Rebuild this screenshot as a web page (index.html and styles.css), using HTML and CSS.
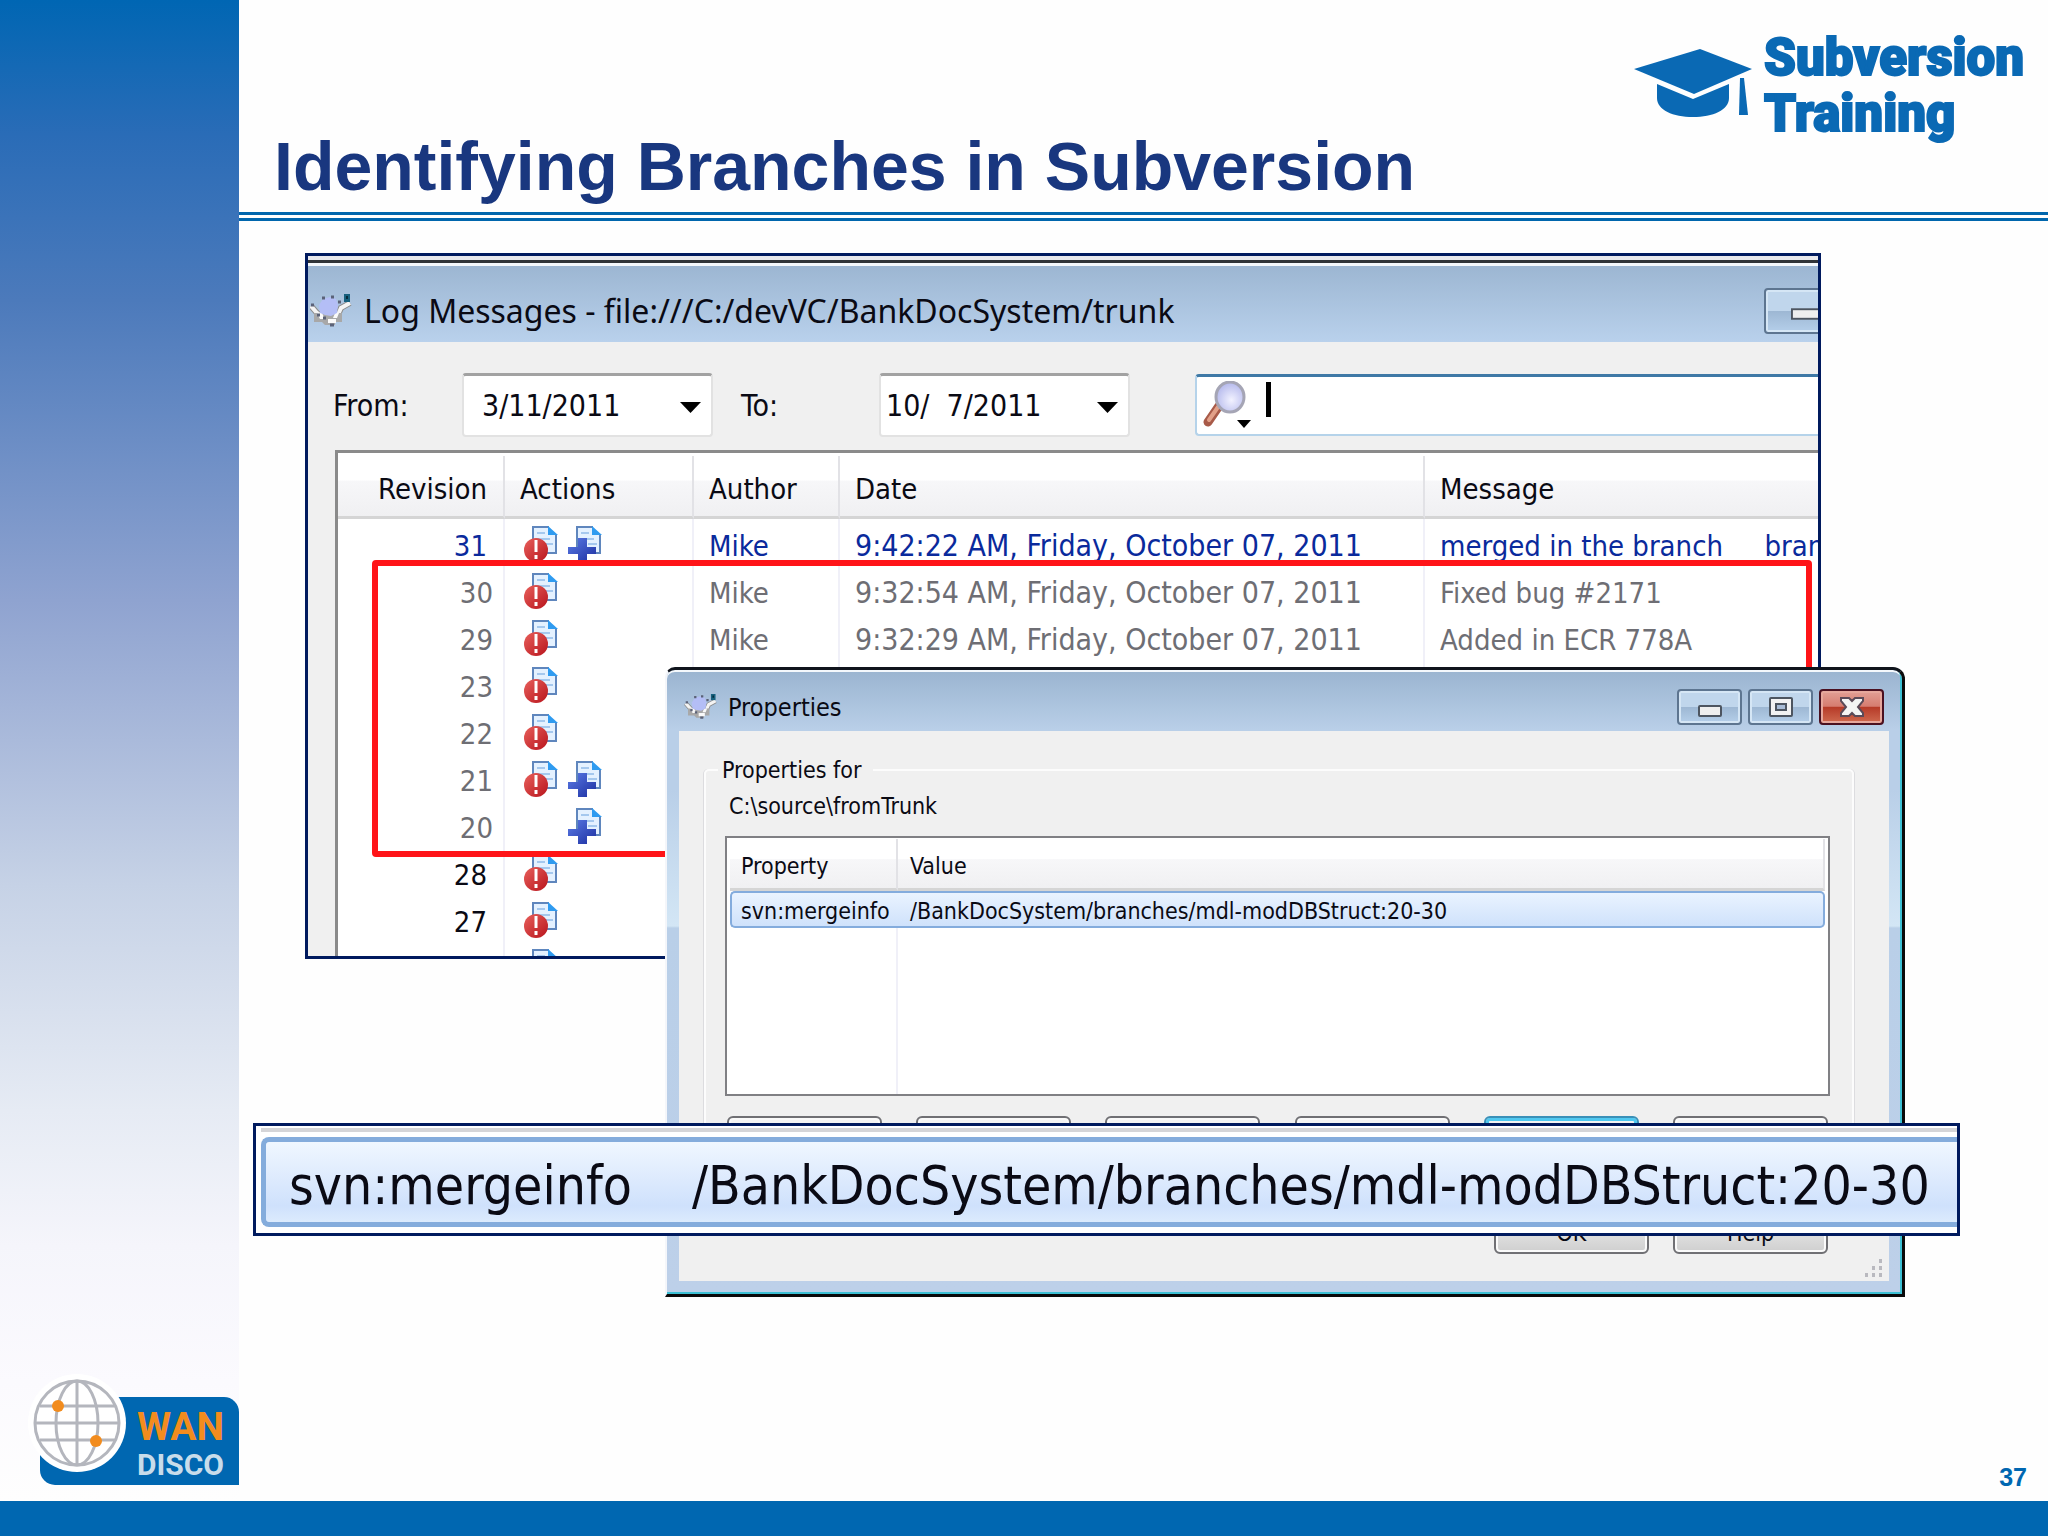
FILE: index.html
```html
<!DOCTYPE html>
<html lang="en">
<head>
  <meta charset="UTF-8" />
  <meta name="viewport" content="width=device-width, initial-scale=1.0"/>
  <title>Identifying Branches in Subversion</title>
  <link rel="stylesheet" href="styles.css">
</head>
<body>

  <!-- shared icons -->
  <svg class="sprite" aria-hidden="true">
    <defs>
      <linearGradient id="ball" x1="0" y1="0" x2="1" y2="1">
        <stop offset="0" stop-color="#e8605c"/>
        <stop offset="1" stop-color="#b8141c"/>
      </linearGradient>
      <linearGradient id="plus" x1="0" y1="0" x2="1" y2="1">
        <stop offset="0" stop-color="#5b7be6"/>
        <stop offset="1" stop-color="#1c2fa0"/>
      </linearGradient>
      <radialGradient id="glass" cx="0.55" cy="0.6" r="0.6">
        <stop offset="0" stop-color="#f2f2ff"/>
        <stop offset="1" stop-color="#b4b8ec"/>
      </radialGradient>
    </defs>
    <symbol id="page" viewBox="0 0 34 36">
      <path d="M9 1h16l8 8v18H9z" fill="#e4f1ff"/>
      <path d="M9 1h16M9 0v28M8 27h25M32 28V8" stroke="#5f86bd" stroke-width="2" fill="none"/>
      <path d="M24 0l10 9h-10z" fill="#2f9bf0"/>
      <path d="M13 7h8M13 13h13M20 18h9" stroke="#a5c8ee" stroke-width="2"/>
    </symbol>
    <symbol id="modified" viewBox="0 0 34 36">
      <use href="#page"/>
      <circle cx="12" cy="24" r="12" fill="url(#ball)"/>
      <path d="M12 14v12M12 29v4" stroke="#fff" stroke-width="3"/>
    </symbol>
    <symbol id="added" viewBox="0 0 34 36">
      <use href="#page"/>
      <path d="M10 12h9v9h9v7h-9v8h-9v-8H0v-7h10z" fill="url(#plus)"/>
    </symbol>
    <symbol id="turtle" viewBox="0 0 42 34">
      <path d="M1 12l6 7 6 4h14l4-9 9-5" stroke="#8b8b8b" stroke-width="6" fill="none"/>
      <path d="M1 12l6 7 6 4h14l4-9 9-5" stroke="#f4f4f4" stroke-width="4" fill="none"/>
      <path d="M4 19h28v9h-7v3H15l-3-3H4z" fill="#a8a8a8"/>
      <path d="M7 19h5l3 6h-5zM18 25h8v4h-8zM25 19h4l-2 5h-4z" fill="#fafafa"/>
      <path d="M10 19l-1-8 4-6 7-2 6 2 2 6-1 8-6 3-6-1z" fill="#b4bef6"/>
      <path d="M12 4h3M21 3h3M28 8h3M1 11h3M7 21h3M13 24h3M20 31h4" stroke="#5b6278" stroke-width="3"/>
      <path d="M34 0h6v8h-6z" fill="#17607e"/>
      <path d="M36 2h2v3h-2z" fill="#062c3c"/>
    </symbol>
  </svg>

  <div class="slide">
    <aside class="sidebar">
      <svg class="wandisco" viewBox="0 0 239 110" role="img" aria-label="WANdisco">
        <path d="M40 17h184a15 15 0 0 1 15 15v73H55a15 15 0 0 1-15-15z" fill="#0067b1"/>
        <circle cx="77" cy="43" r="49" fill="#fff"/>
        <g fill="none" stroke="#b4b6bd" stroke-width="3">
          <circle cx="77" cy="43" r="42"/>
          <ellipse cx="77" cy="43" rx="21" ry="42"/>
          <path d="M77 1v84M35 43h84M40 26h75M40 60h75"/>
        </g>
        <circle cx="58" cy="26" r="6" fill="#f28c1e"/>
        <circle cx="96" cy="61" r="6" fill="#f28c1e"/>
        <text class="wan" x="137" y="60">WAN</text>
        <text class="disco" x="137" y="95">DISCO</text>
      </svg>
    </aside>

    <main class="content">
      <header class="heading">
        <h1>Identifying Branches in Subversion</h1>
        <div class="training">
          <svg width="118" height="70" viewBox="0 0 118 70" aria-hidden="true">
            <path d="M0 21L66 1l52 20-58 25z" fill="#0a69b4"/>
            <path d="M23 36l36 15 36-15v14c0 12-16 19-36 19S23 62 23 50z" fill="#0a69b4"/>
            <path d="M106 30h4l4 37h-9z" fill="#0a69b4"/>
          </svg>
          <p>Subversion<br>Training</p>
        </div>
      </header>

      <div class="stage">
        <section class="log-window">
          <div class="titlebar">
            <svg class="turtle" aria-hidden="true"><use href="#turtle"/></svg>
            <h2>Log Messages - file:///C:/devVC/BankDocSystem/trunk</h2>
            <button class="win-btn" type="button" aria-label="Minimize">
              <svg width="64" height="12" viewBox="0 0 64 12"><rect x="1" y="1" width="40" height="10" fill="#eee" stroke="#4d5560" stroke-width="2"/></svg>
            </button>
          </div>

          <form class="filter">
            <label for="from">From:</label>
            <div class="date">
              <input id="from" type="text" value="3/11/2011">
              <button type="button" aria-label="Pick start date"></button>
            </div>
            <label for="to">To:</label>
            <div class="date to">
              <input id="to" type="text" value="10/  7/2011">
              <button type="button" aria-label="Pick end date"></button>
            </div>
            <div class="search">
              <svg width="50" height="48" viewBox="0 0 50 48" aria-hidden="true">
                <path d="M16 25L5 41" stroke="#a85a48" stroke-width="9" stroke-linecap="round"/>
                <path d="M15 26L6 39" stroke="#e2a088" stroke-width="4" stroke-linecap="round"/>
                <ellipse cx="27" cy="16" rx="14" ry="15" fill="url(#glass)" stroke="#a5a5b5" stroke-width="3"/>
                <path d="M34 39h14l-7 8z"/>
              </svg>
              <span class="caret"></span>
              <input type="text" aria-label="Filter log messages">
            </div>
          </form>

          <table class="log">
            <colgroup>
              <col class="c-rev"><col class="c-act"><col class="c-author"><col class="c-date"><col>
            </colgroup>
            <thead>
              <tr><th class="rev">Revision</th><th>Actions</th><th>Author</th><th>Date</th><th>Message</th></tr>
            </thead>
            <tbody>
              <tr class="current">
                <td class="rev">31</td>
                <td><svg class="act"><use href="#modified"/></svg><svg class="act"><use href="#added"/></svg></td>
                <td>Mike</td><td class="when">9:42:22 AM, Friday, October 07, 2011</td><td>merged in the branch     bran</td>
              </tr>
              <tr class="merged">
                <td class="rev">30</td>
                <td><svg class="act"><use href="#modified"/></svg></td>
                <td>Mike</td><td class="when">9:32:54 AM, Friday, October 07, 2011</td><td>Fixed bug #2171</td>
              </tr>
              <tr class="merged">
                <td class="rev">29</td>
                <td><svg class="act"><use href="#modified"/></svg></td>
                <td>Mike</td><td class="when">9:32:29 AM, Friday, October 07, 2011</td><td>Added in ECR 778A</td>
              </tr>
              <tr class="merged">
                <td class="rev">23</td>
                <td><svg class="act"><use href="#modified"/></svg></td>
                <td></td><td></td><td></td>
              </tr>
              <tr class="merged">
                <td class="rev">22</td>
                <td><svg class="act"><use href="#modified"/></svg></td>
                <td></td><td></td><td></td>
              </tr>
              <tr class="merged">
                <td class="rev">21</td>
                <td><svg class="act"><use href="#modified"/></svg><svg class="act"><use href="#added"/></svg></td>
                <td></td><td></td><td></td>
              </tr>
              <tr class="merged">
                <td class="rev">20</td>
                <td><svg class="act"></svg><svg class="act"><use href="#added"/></svg></td>
                <td></td><td></td><td></td>
              </tr>
              <tr>
                <td class="rev">28</td>
                <td><svg class="act"><use href="#modified"/></svg></td>
                <td></td><td></td><td></td>
              </tr>
              <tr>
                <td class="rev">27</td>
                <td><svg class="act"><use href="#modified"/></svg></td>
                <td></td><td></td><td></td>
              </tr>
              <tr>
                <td class="rev"></td>
                <td><svg class="act"><use href="#modified"/></svg></td>
                <td></td><td></td><td></td>
              </tr>
            </tbody>
          </table>

          <div class="highlight"></div>
        </section>

        <section class="props-window">
          <div class="titlebar">
            <svg class="turtle" aria-hidden="true"><use href="#turtle"/></svg>
            <h2>Properties</h2>
            <button class="win-btn" type="button" aria-label="Minimize">
              <svg width="24" height="12" viewBox="0 0 24 12"><rect x="1" y="1" width="22" height="10" rx="1" fill="#eee" stroke="#4d5560" stroke-width="2"/></svg>
            </button>
            <button class="win-btn" type="button" aria-label="Maximize">
              <svg width="24" height="20" viewBox="0 0 24 20"><rect x="1" y="1" width="22" height="18" rx="1" fill="#f2f2f2" stroke="#4d5560" stroke-width="2"/><rect x="7" y="7" width="10" height="6" fill="#a9bcd6" stroke="#4d5560" stroke-width="2"/></svg>
            </button>
            <button class="win-btn close" type="button" aria-label="Close">
              <svg width="24" height="20" viewBox="0 0 24 20"><path d="M1 1h8l3 3 3-3h8v3l-5 6 5 6v3h-8l-3-3-3 3H1v-3l5-6-5-6z" fill="#f4f4f4" stroke="#5a4a58" stroke-width="2"/></svg>
            </button>
          </div>

          <div class="props-body">
            <fieldset>
              <legend>Properties for</legend>
              <p>C:\source\fromTrunk</p>
              <div class="list">
                <table class="props">
                  <colgroup><col class="c-prop"><col></colgroup>
                  <thead>
                    <tr><th>Property</th><th>Value</th></tr>
                  </thead>
                  <tbody>
                    <tr class="selected"><td>svn:mergeinfo</td><td>/BankDocSystem/branches/mdl-modDBStruct:20-30</td></tr>
                  </tbody>
                </table>
                <div class="list-rest"></div>
              </div>
              <div class="buttons">
                <button type="button" aria-label="Import"></button>
                <button type="button" aria-label="Export"></button>
                <button type="button" aria-label="Save"></button>
                <button type="button" aria-label="Remove"></button>
                <button class="focused" type="button" aria-label="Edit"></button>
                <button type="button" aria-label="New"></button>
              </div>
            </fieldset>
            <div class="buttons dialog-buttons">
              <button type="button">OK</button>
              <button type="button">Help</button>
            </div>
            <svg class="grip" width="18" height="18" viewBox="0 0 18 18" aria-hidden="true">
              <path d="M14 0h3v4h-3zM7 7h3v4H7zM14 7h3v4h-3zM0 14h3v4H0zM7 14h3v4H7zM14 14h3v4h-3z" fill="#b9b9bf"/>
            </svg>
          </div>
        </section>

        <div class="callout">
          <div class="callout-row">
            <span class="name">svn:mergeinfo</span>
            <span>/BankDocSystem/branches/mdl-modDBStruct:20-30</span>
          </div>
        </div>

        <span class="page-number">37</span>
      </div>
    </main>
  </div>

  <footer class="footer"></footer>

</body>
</html>
```
FILE: styles.css
```css
* {
  box-sizing: border-box;
}

body {
  margin: 0;
  min-height: 100vh;
  display: flex;
  flex-direction: column;
  background: #fefefe;
  font-family: "DejaVu Sans Condensed", "DejaVu Sans", sans-serif;
  color: #0a0a14;
}

h1, h2, p {
  margin: 0;
}

button, input {
  font: inherit;
  color: inherit;
  padding: 0;
}

.sprite {
  position: absolute;
  width: 0;
  height: 0;
}

.slide {
  flex: 1;
  display: flex;
}

.footer {
  height: 35px;
  background: #0067b1;
}

/* left band */
.sidebar {
  width: 239px;
  display: flex;
  align-items: flex-end;
  padding-bottom: 11px;
  background: linear-gradient(#0066b3 0%, #2a6cb7 9%, #4c7abb 20%, #8fa3d0 40%, #c6d2e6 59%, #e6ebf4 74%, #f5f5fb 83%, #fbfafe 92%, #fefefe 100%);
}

.wandisco {
  width: 239px;
  height: 110px;
  overflow: visible;
}

.wan, .disco {
  font-family: Roboto, "Liberation Sans", sans-serif;
  font-weight: bold;
}

.wan {
  font-size: 39px;
  fill: #f28c1e;
}

.disco {
  font-size: 30px;
  fill: #c8dcea;
}

.content {
  flex: 1;
  min-width: 0;
  display: flex;
  flex-direction: column;
}

/* slide heading */
.heading {
  height: 221px;
  display: flex;
  justify-content: space-between;
  align-items: flex-end;
  padding: 0 24px 6px 35px;
  border-bottom: 9px double #0066ad;
}

.heading h1 {
  font: bold 68px/80px "Liberation Sans", Arial, sans-serif;
  color: #19377f;
}

.training {
  align-self: flex-start;
  display: flex;
  gap: 12px;
  padding-top: 30px;
}

.training svg {
  margin-top: 18px;
}

.training p {
  font: 900 51px/56px Roboto, "Liberation Sans", sans-serif;
  color: #0a69b4;
  -webkit-text-stroke: 2px #0a69b4;
}

.stage {
  flex: 1;
  position: relative;
}

.page-number {
  position: absolute;
  right: 21px;
  bottom: 10px;
  font: bold 25px/28px "Liberation Sans", Arial, sans-serif;
  color: #0067b1;
}

/* shared window parts */
.titlebar {
  display: flex;
  align-items: center;
  background: linear-gradient(#9ab4d0, #b9d1ec);
}

.titlebar h2 {
  flex: 1;
  font-weight: normal;
  white-space: nowrap;
}

.win-btn {
  display: flex;
  align-items: center;
  justify-content: center;
  width: 65px;
  height: 36px;
  border: 2px solid #5d7590;
  border-radius: 4px;
  box-shadow: inset 0 0 0 2px #d5e6f5;
  background: linear-gradient(#c0d6ec 50%, #9db7d3 50%, #b5cfea);
}

.win-btn.close {
  border-color: #4a1020;
  box-shadow: inset 0 0 0 2px #e6a79c;
  background: linear-gradient(#e2a096, #d67c70 48%, #b63a28 50%, #cf6a50);
}

th, td {
  font-weight: normal;
  text-align: left;
  white-space: pre;
  overflow: hidden;
}

table {
  border-collapse: separate;
  border-spacing: 0;
  table-layout: fixed;
}

th {
  background: linear-gradient(#fff 40%, #f7f7f9 42%, #f0f0f2);
  border-bottom: 3px solid #d5d5d5;
  border-right: 2px solid #e2e2e6;
}

/* log messages window */
.log-window {
  position: absolute;
  left: 66px;
  right: 227px;
  top: 32px;
  bottom: 542px;
  overflow: hidden;
  border: 3px solid #001a5e;
  background: #f0f0f0;
  font-size: 29px;
}

.log-window .titlebar {
  height: 86px;
  padding-top: 20px;
  border-top: 4px solid #e8e8ec;
  box-shadow: inset 0 3px #303438, inset 0 6px #f4f8fc;
}

.log-window h2 {
  font: 32px/44px "Noto Sans", sans-serif;
  margin-left: 12px;
}

.log-window .turtle {
  width: 42px;
  height: 34px;
  margin-left: 2px;
}

.log-window .win-btn {
  justify-content: flex-start;
  width: 90px;
  height: 46px;
  padding: 6px 0 0 25px;
  margin-right: -36px;
}

.filter {
  display: flex;
  align-items: center;
  height: 64px;
  margin: 31px 0 13px 25px;
  font-size: 30px;
}

.filter label {
  width: 129px;
}

.filter .date + label {
  padding-left: 28px;
  width: 166px;
}

.date {
  width: 251px;
  height: 64px;
  display: flex;
  align-items: center;
  background: #fff;
  border: 2px solid #e2e2e2;
  border-top: 3px solid #a2a2a2;
  border-radius: 4px;
}

.date input {
  flex: 1;
  min-width: 0;
  border: 0;
  padding-left: 18px;
  background: none;
}

.date.to input {
  padding-left: 5px;
}

.date button {
  width: 21px;
  height: 11px;
  margin: 4px 10px 0 0;
  border: 0;
  background: #000;
  clip-path: polygon(0 0, 100% 0, 50% 100%);
}

.search {
  flex: 1;
  height: 62px;
  margin-left: 65px;
  display: flex;
  align-items: flex-start;
  padding: 4px 0 0 6px;
  background: #fff;
  border: 2px solid #b5d3ea;
  border-top: 3px solid #3f79a6;
  border-right: 0;
  border-radius: 4px 0 0 4px;
}

.search input {
  flex: 1;
  min-width: 0;
  border: 0;
  background: none;
}

.caret {
  width: 5px;
  height: 35px;
  margin: 1px 0 0 13px;
  background: #000;
}

.log {
  width: calc(100% - 27px);
  margin-left: 27px;
  padding-top: 3px;
  background: #fff;
  border-left: 3px solid #8a8a8a;
  border-top: 3px solid #8a8a8a;
}

.c-rev { width: 167px; }
.c-act { width: 189px; }
.c-author { width: 146px; }
.c-date { width: 585px; }

.log th {
  height: 63px;
  padding: 6px 0 0 15px;
}

.log td {
  height: 47px;
  line-height: 40px;
  padding: 6px 0 0 15px;
  border-right: 2px solid #f0f0f8;
}

.log td.when {
  font-size: 30px;
}

.log th:last-child,
.log td:last-child {
  border-right: 0;
}

.log th.rev,
.log td.rev {
  text-align: right;
  padding-right: 16px;
}

.log .merged td.rev {
  padding-right: 10px;
}

.act {
  width: 34px;
  height: 36px;
  margin: 0 6px 0 4px;
  vertical-align: top;
}

.current {
  color: #0a2a9c;
}

.merged {
  color: #6e6e74;
}

.highlight {
  position: absolute;
  left: 64px;
  right: 6px;
  top: 304px;
  height: 297px;
  border: 6px solid #ff1418;
  border-radius: 4px;
}

/* properties window */
.props-window {
  position: absolute;
  left: 426px;
  right: 143px;
  top: 446px;
  bottom: 204px;
  display: flex;
  flex-direction: column;
  padding: 0 13px 13px 12px;
  border-left: 2px solid #f4f6fa;
  border-top: 3px solid #10141c;
  border-right: 3px solid #0a0a0a;
  border-bottom: 3px solid #0a0a0a;
  border-radius: 10px 12px 0 0;
  box-shadow: inset -2px -2px #3cc0d4, inset 0 2px #f4f8fc;
  background: linear-gradient(#9ab4d0, #b9cfe8 60px, #b9cfe8 120px, #d3e6f5 256px, #b9cfe8 258px, #bdd0e9);
  font-size: 23px;
}

.props-window .titlebar {
  height: 61px;
  gap: 6px;
  background: none;
  padding: 19px 5px 0 5px;
  align-items: flex-start;
}

.props-window .turtle {
  width: 34px;
  height: 26px;
  margin-top: 5px;
}

.props-window h2 {
  font-size: 25px;
  line-height: 36px;
  margin: 1px 0 0 4px;
}

.props-window .win-btn:first-of-type svg {
  margin-top: 8px;
}

.props-body {
  flex: 1;
  position: relative;
  background: #f0f0f0;
  padding: 25px 35px 0 25px;
}

fieldset {
  margin: 0;
  padding: 0 22px 18px 19px;
  border: 2px solid #fcfcfc;
  border-radius: 5px;
  box-shadow: -1px 0 #dcdcdf, 1px 0 #dcdcdf;
}

fieldset legend {
  margin-left: -7px;
  padding: 0 12px 0 4px;
  line-height: 28px;
  background: #f0f0f0;
}

fieldset p {
  line-height: 28px;
  padding: 8px 4px 0;
}

.list {
  height: 260px;
  margin: 16px 0 20px;
  padding: 1px 3px 0;
  display: flex;
  flex-direction: column;
  background: #fff;
  border: 2px solid #808084;
}

.props {
  width: 100%;
}

.c-prop { width: 168px; }

.props th {
  height: 52px;
  padding: 4px 0 0 11px;
}

.props th + th {
  padding-left: 12px;
}

.props td {
  height: 37px;
  line-height: 30px;
  padding: 3px 0 0 9px;
  border: 2px solid #84acdd;
  border-right: 0;
  border-radius: 5px 0 0 5px;
  background: linear-gradient(#eaf3ff, #cfe2fb);
}

.props td + td {
  padding-left: 12px;
  border-left: 0;
  border-right: 2px solid #84acdd;
  border-radius: 0 5px 5px 0;
}

.list-rest {
  flex: 1;
  width: 168px;
  border-right: 2px solid #f0f0f8;
}

.buttons {
  display: flex;
  justify-content: space-between;
  padding: 0 2px;
}

.buttons button {
  width: 155px;
  height: 42px;
  border: 2px solid #707074;
  border-radius: 6px;
  box-shadow: inset 0 0 0 2px #fafafa;
  background: linear-gradient(#f3f3f3 50%, #e0e0e0 50%, #cfcfcf);
}

.buttons .focused {
  border-color: #3a90b8;
  box-shadow: inset 0 0 0 3px #4fc8f0;
}

.dialog-buttons {
  justify-content: flex-end;
  gap: 24px;
  margin: 34px 24px 0 0;
}

.grip {
  position: absolute;
  right: 6px;
  bottom: 4px;
}

/* enlarged property row */
.callout {
  position: absolute;
  left: 14px;
  right: 88px;
  top: 902px;
  padding: 2px 0 6px 5px;
  border: 3px solid #001a5e;
  background: #fff;
}

.callout::before {
  content: "";
  display: block;
  height: 4px;
  margin-bottom: 5px;
  background: #d5d5d8;
}

.callout-row {
  display: flex;
  height: 90px;
  padding: 8px 0 0 23px;
  border: 5px solid #84acdc;
  border-right: 0;
  border-radius: 8px 0 0 8px;
  background: linear-gradient(#f0f7ff, #cfe1fc 80%, #dcebfd);
  font-size: 53px;
  line-height: 72px;
  white-space: nowrap;
  overflow: hidden;
}

.callout .name {
  width: 403px;
}
```
